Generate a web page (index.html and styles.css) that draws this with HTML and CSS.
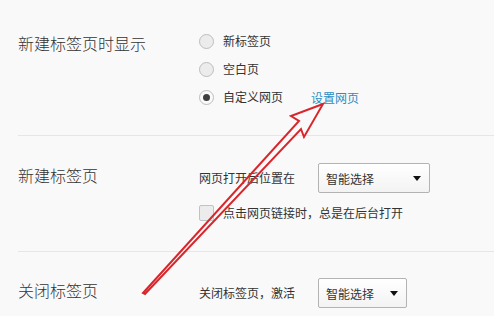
FILE: index.html
```html
<!DOCTYPE html>
<html lang="zh-CN">
<head>
<meta charset="utf-8">
<title>标签页设置</title>
<link rel="stylesheet" href="styles.css">
</head>
<body>
<div class="page">
  <section class="sec sec-first">
    <div class="title t1">新建标签页时显示</div>
    <div class="opts">
      <div class="row radio-row"><span class="radio"></span><span class="lbl">新标签页</span></div>
      <div class="row radio-row"><span class="radio"></span><span class="lbl">空白页</span></div>
      <div class="row radio-row"><span class="radio on"></span><span class="lbl">自定义网页</span><a class="link">设置网页</a></div>
    </div>
  </section>
  <section class="sec sec-second">
    <div class="title">新建标签页</div>
    <div class="opts">
      <div class="field">
        <span class="lbl">网页打开后位置在</span>
        <div class="select wide"><span>智能选择</span><i class="caret"></i></div>
      </div>
      <div class="row check-row"><span class="check"></span><span class="lbl">点击网页链接时，总是在后台打开</span></div>
    </div>
  </section>
  <section class="sec sec-third">
    <div class="title">关闭标签页</div>
    <div class="opts">
      <div class="field">
        <span class="lbl">关闭标签页，激活</span>
        <div class="select narrow"><span>智能选择</span><i class="caret"></i></div>
      </div>
    </div>
  </section>
  <svg class="arrow" width="494" height="316" viewBox="0 0 494 316">
    <polygon points="143,293 299,121 291,116 323,104 304,137 301,129 145,294" fill="none" stroke="#d8262c" stroke-width="2" stroke-linejoin="miter"/>
  </svg>
</div>
</body>
</html>
```
FILE: styles.css
```css
* { box-sizing: border-box; }
html, body { margin: 0; padding: 0; }
body {
  background: #f9f9f9;
  font-family: "Noto Sans CJK SC", "Noto Sans", sans-serif;
  color: #333;
  width: 494px;
  height: 316px;
  overflow: hidden;
}
.page { position: relative; padding-left: 18px; }
.sec {
  display: grid;
  grid-template-columns: 181px 1fr;
  border-bottom: 1px solid #e6e6e6;
}
.sec-first { padding-top: 27px; height: 136px; }
.sec-second { padding-top: 27px; height: 116px; }
.sec-third { padding-top: 26px; border-bottom: none; }
.title {
  font-size: 16px;
  line-height: 24px;
  color: #333;
  font-weight: 300;
}
.t1 { margin-top: 4px; }
.opts { display: flex; flex-direction: column; }
.row { display: flex; align-items: center; font-size: 12px; }
.radio-row { height: 28px; }
.radio {
  width: 15px; height: 15px;
  border-radius: 50%;
  border: 1px solid #bdbdbd;
  background: #ececec;
  margin-right: 9px;
  display: flex; align-items: center; justify-content: center;
}
.radio.on { background: #fafafa; }
.radio.on::after {
  content: "";
  width: 7px; height: 7px;
  border-radius: 50%;
  background: #3f3f3f;
}
.lbl { font-size: 12px; color: #333; line-height: 16px; }
.link { color: #2a8ec3; font-size: 12px; margin-left: 28px; }
.field {
  display: grid;
  grid-template-columns: 119px auto;
  align-items: center;
  height: 30px;
}
.select {
  height: 30px;
  border: 1px solid #b3b3b3;
  border-radius: 2px;
  background: linear-gradient(#ffffff, #f3f3f3);
  display: flex;
  align-items: center;
  justify-content: space-between;
  padding: 0 8px 0 7px;
  font-size: 12px;
  color: #333;
}
.select.wide { width: 112px; }
.select.narrow { width: 89px; }
.caret {
  width: 0; height: 0;
  border-left: 4px solid transparent;
  border-right: 4px solid transparent;
  border-top: 5px solid #111;
}
.check-row { height: 20px; margin-top: 10px; }
.check {
  width: 15px; height: 16px;
  border: 1px solid #c2c2c2;
  border-radius: 2px;
  background: #ececec;
  margin-right: 9px;
}
.arrow { position: absolute; left: 0; top: 0; pointer-events: none; }
```
